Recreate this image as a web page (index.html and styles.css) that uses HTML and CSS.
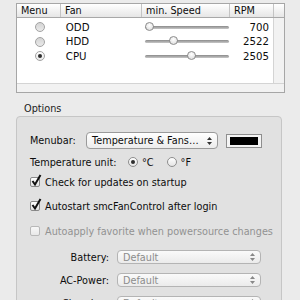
FILE: index.html
```html
<!DOCTYPE html>
<html lang="en">
<head>
    <meta charset="UTF-8">
    <title>smcFanControl Preferences</title>
    <link rel="stylesheet" href="styles.css">
</head>
<body>
    <!-- Fan list -->
    <div class="scroll">
        <div class="thead">
            <div class="th c-menu">Menu</div>
            <div class="th c-fan">Fan</div>
            <div class="th c-speed">min. Speed</div>
            <div class="th c-rpm">RPM</div>
            <div class="th c-corner"></div>
        </div>
        <div class="main">
            <div class="rows">
                <div class="tr">
                    <div class="c-menu"><span class="radio gray"></span></div>
                    <div class="c-fan">ODD</div>
                    <div class="c-speed"><span class="slider"><span class="thumb" style="left: 0px"></span></span></div>
                    <div class="c-rpm">700</div>
                </div>
                <div class="tr">
                    <div class="c-menu"><span class="radio gray"></span></div>
                    <div class="c-fan">HDD</div>
                    <div class="c-speed"><span class="slider"><span class="thumb" style="left: 24px"></span></span></div>
                    <div class="c-rpm">2522</div>
                </div>
                <div class="tr">
                    <div class="c-menu"><span class="radio gray on"></span></div>
                    <div class="c-fan">CPU</div>
                    <div class="c-speed"><span class="slider"><span class="thumb" style="left: 42px"></span></span></div>
                    <div class="c-rpm">2505</div>
                </div>
            </div>
            <div class="vbar"></div>
        </div>
        <div class="hbar"></div>
    </div>

    <!-- Options -->
    <div class="group-title">Options</div>
    <div class="group">
        <div class="line menubar">
            <span class="label">Menubar:</span>
            <span class="popup wide">
                <span class="popup-text">Temperature &amp; Fans…</span>
                <svg class="arrows" width="7" height="10" viewBox="0 0 7 10"><path d="M3.5 1 L6 4 L1 4 Z M3.5 9 L6 6 L1 6 Z" fill="#333"/></svg>
            </span>
            <span class="well"><span class="swatch"></span></span>
        </div>
        <div class="line unit">
            <span class="label">Temperature unit:</span>
            <span class="radio on"></span><span class="opt">°C</span>
            <span class="radio"></span><span class="opt">°F</span>
        </div>
        <div class="line check-updates">
            <span class="check on"><svg width="12" height="13" viewBox="0 0 12 13"><path d="M2.5 7 L5 10.5 L10.5 1" fill="none" stroke="#111" stroke-width="2"/></svg></span>
            <span>Check for updates on startup</span>
        </div>
        <div class="line autostart">
            <span class="check on"><svg width="12" height="13" viewBox="0 0 12 13"><path d="M2.5 7 L5 10.5 L10.5 1" fill="none" stroke="#111" stroke-width="2"/></svg></span>
            <span>Autostart smcFanControl after login</span>
        </div>
        <div class="line autoapply disabled">
            <span class="check"></span>
            <span>Autoapply favorite when powersource changes</span>
        </div>
        <div class="line source first">
            <span class="label right">Battery:</span>
            <span class="popup dim">
                <span class="popup-text">Default</span>
                <svg class="arrows" width="7" height="10" viewBox="0 0 7 10"><path d="M3.5 1 L6 4 L1 4 Z M3.5 9 L6 6 L1 6 Z" fill="#888"/></svg>
            </span>
        </div>
        <div class="line source">
            <span class="label right">AC-Power:</span>
            <span class="popup dim">
                <span class="popup-text">Default</span>
                <svg class="arrows" width="7" height="10" viewBox="0 0 7 10"><path d="M3.5 1 L6 4 L1 4 Z M3.5 9 L6 6 L1 6 Z" fill="#888"/></svg>
            </span>
        </div>
        <div class="line source">
            <span class="label right">Charging:</span>
            <span class="popup dim">
                <span class="popup-text">Default</span>
                <svg class="arrows" width="7" height="10" viewBox="0 0 7 10"><path d="M3.5 1 L6 4 L1 4 Z M3.5 9 L6 6 L1 6 Z" fill="#888"/></svg>
            </span>
        </div>
    </div>
</body>
</html>
```

FILE: styles.css
```css
body {
    margin: 0;
    padding-top: 3px;
    background-color: #ebebeb;
    font-family: "DejaVu Sans", sans-serif;
    font-size: 9.7px;
    color: #0c0c0c;
    overflow: hidden;
    height: 300px;
}

/* fan table */
.scroll {
    margin-left: 16px;
    width: 267px;
    height: 88px;
    border: 1px solid #a6a6a6;
    background-color: #f0f0f0;
    display: flex;
    flex-direction: column;
}
.thead {
    display: flex;
    height: 13px;
    background: linear-gradient(#ffffff, #e6e6e6);
    border-bottom: 1px solid #a8a8a8;
}
.th {
    line-height: 13px;
    padding-left: 4px;
    border-right: 1px solid #c4c4c4;
    box-sizing: border-box;
}
.c-menu { width: 44px; }
.c-fan { width: 81px; }
.c-speed { width: 88px; }
.c-rpm { width: 44px; }
.c-corner { width: 10px; border-right: none; }
.main {
    display: flex;
    flex: 1;
}
.rows {
    width: 256px;
    background-color: #fff;
    border-right: 1px solid #d4d4d4;
    padding-top: 2px;
}
.vbar {
    flex: 1;
    background-color: #f2f2f2;
}
.hbar {
    height: 8px;
    border-top: 1px solid #d4d4d4;
    background-color: #f2f2f2;
}
.tr {
    display: flex;
    height: 14.5px;
    align-items: center;
}
.tr .c-menu {
    display: flex;
    justify-content: center;
    padding-left: 2px;
    box-sizing: border-box;
}
.tr .c-fan { padding-left: 5px; box-sizing: border-box; font-size: 10.2px; }
.tr .c-rpm {
    text-align: right;
    padding-right: 4px;
    box-sizing: border-box;
    font-size: 10.2px;
}
.tr .c-speed {
    display: flex;
    align-items: center;
    padding-left: 3px;
    box-sizing: border-box;
}
.slider {
    position: relative;
    width: 84px;
    height: 3px;
    border-radius: 2px;
    background: linear-gradient(#8a8a8a, #c8c8c8);
}
.thumb {
    position: absolute;
    top: -4px;
    width: 9px;
    height: 9px;
    border-radius: 50%;
    border: 1px solid #8c8c8c;
    box-sizing: border-box;
    background: radial-gradient(circle at 50% 35%, #ffffff, #d8d8d8);
}

/* radio + check */
.radio {
    width: 10px;
    height: 10px;
    border-radius: 50%;
    border: 1px solid #8e8e8e;
    box-sizing: border-box;
    background: linear-gradient(#ffffff, #e4e4e4);
    display: inline-flex;
    align-items: center;
    justify-content: center;
}
.radio.gray {
    border-color: #a2a2a2;
    background: linear-gradient(#d4d4d4, #eaeaea);
}
.radio.on::after {
    content: "";
    width: 4px;
    height: 4px;
    border-radius: 50%;
    background-color: #2e2e2e;
}
.radio.gray.on {
    background: linear-gradient(#ffffff, #e8e8e8);
}
.check {
    position: relative;
    width: 10px;
    height: 10px;
    border: 1px solid #8a8a8a;
    border-radius: 2px;
    box-sizing: border-box;
    background: linear-gradient(#ffffff, #e2e2e2);
    flex: none;
}
.check svg {
    position: absolute;
    left: -1px;
    top: -4px;
}

/* options group */
.group-title {
    margin: 9px 0 0 24px;
    height: 13px;
    line-height: 13px;
    color: #222;
}
.group {
    margin-left: 16px;
    margin-top: 1px;
    width: 266px;
    height: 200px;
    border: 1px solid #c6c6c6;
    border-radius: 4px;
    background-color: #e1e1e1;
    padding: 15px 0 0 13px;
    box-sizing: border-box;
}
.line {
    display: flex;
    align-items: center;
    height: 14px;
}
.menubar { height: 17px; }
.menubar .label { width: 56px; }
.popup {
    height: 14px;
    border: 1px solid #9a9a9a;
    border-radius: 4px;
    background: linear-gradient(#ffffff, #ececec);
    box-sizing: border-box;
    display: flex;
    align-items: center;
    justify-content: space-between;
    padding: 0 4px 0 5px;
    width: 144px;
}
.popup.wide {
    width: 132px;
    height: 17px;
    padding-left: 5px;
}
.popup.dim {
    color: #8c8c8c;
    border-color: #b4b4b4;
    background: linear-gradient(#fafafa, #ebebeb);
}
.arrows { flex: none; }
.well {
    margin-left: 8px;
    width: 36px;
    height: 14px;
    border: 1px solid #8e8e8e;
    background-color: #f4f4f4;
    box-sizing: border-box;
    padding: 2px 3px;
    display: flex;
}
.swatch {
    flex: 1;
    background-color: #000;
}
.unit { margin-top: 6px; }
.unit .label { width: 98px; }
.unit .opt { margin: 0 13px 0 4px; }
.check-updates { margin-top: 6px; gap: 5px; }
.autostart { margin-top: 10px; gap: 5px; }
.autoapply { margin-top: 11px; gap: 5px; }
.disabled { color: #929292; }
.disabled .check {
    border-color: #b8b8b8;
    background: linear-gradient(#f8f8f8, #e8e8e8);
}
.source { margin-top: 9px; }
.source.first { margin-top: 12px; }
.label.right {
    width: 79px;
    text-align: right;
    margin-right: 8px;
}
```
